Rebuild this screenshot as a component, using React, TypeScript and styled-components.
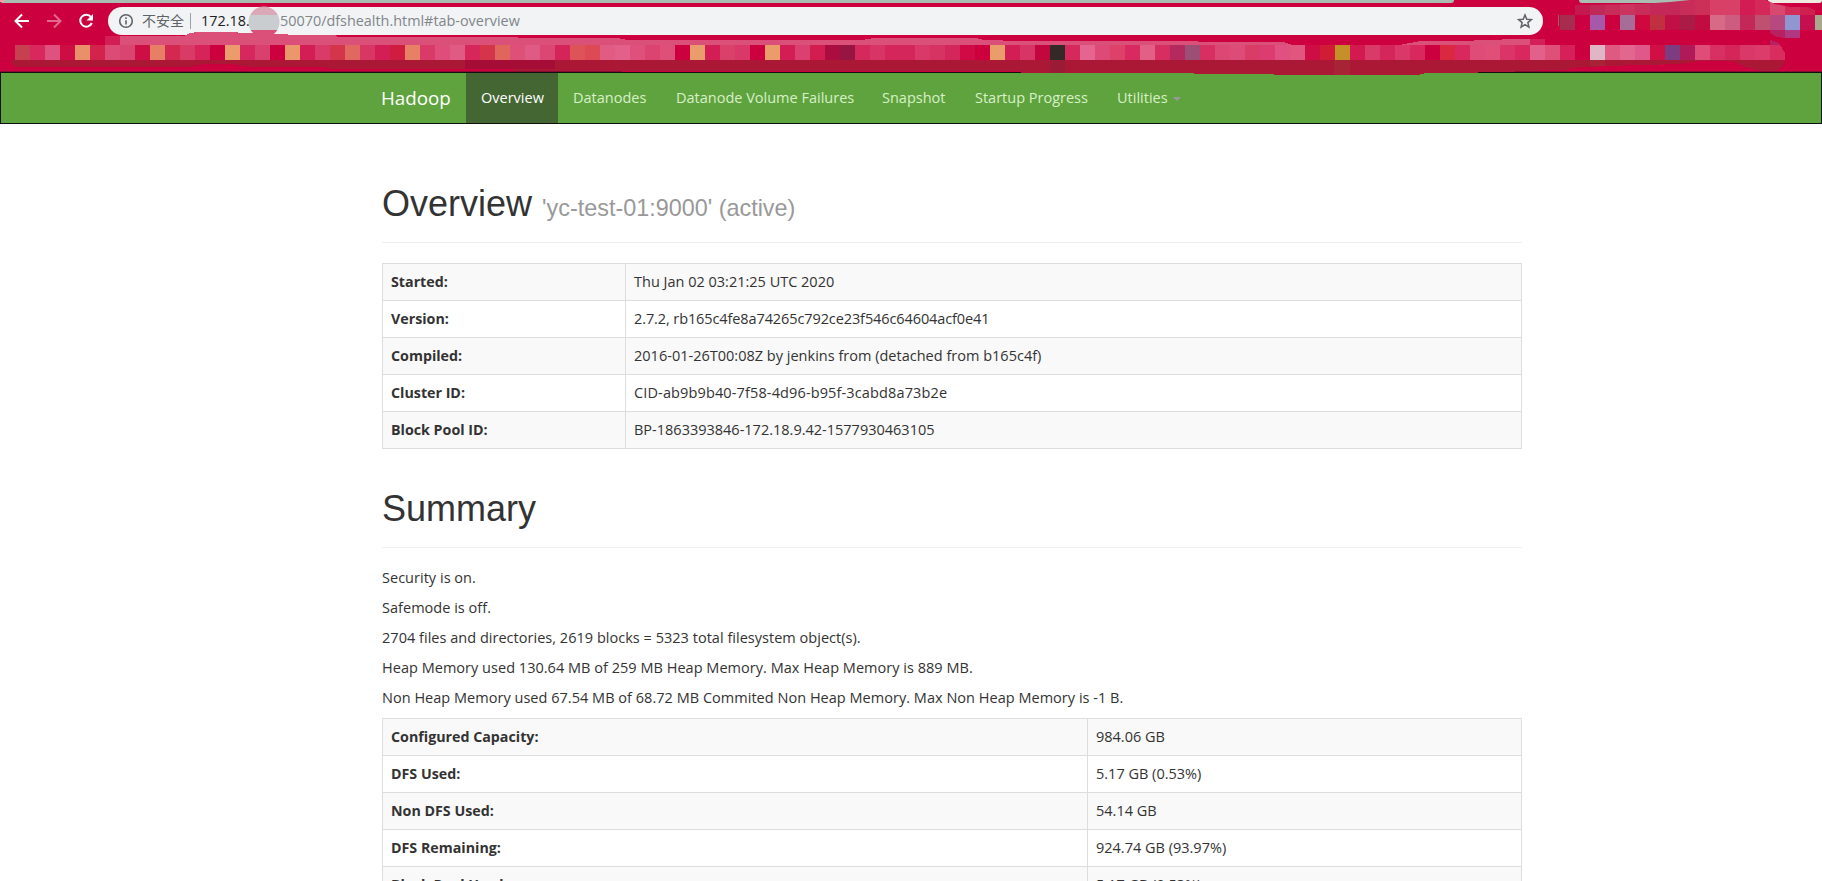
import React from "react";
import styled, { createGlobalStyle } from "styled-components";

const Global = createGlobalStyle`
  * { box-sizing: border-box; }
  html, body { margin: 0; padding: 0; background: #fff; overflow: hidden; }
  body { height: 881px; font: 14.5px/20px "Open Sans", "Noto Sans CJK SC", sans-serif; color: #333; }
`;

const Page = styled.div`
  height: 881px;
  overflow: hidden;
`;

const Browser = styled.header`
  position: relative;
  height: 72px;
  background: #cc003f;
`;

const TabStrip = styled.div`
  display: flex;
  height: 3px;
`;

const Tab = styled.div<{ $w: number; $gap?: number; $c?: string }>`
  width: ${(p) => p.$w}px;
  margin-right: ${(p) => p.$gap ?? 0}px;
  background: ${(p) => p.$c ?? "#a9bdb3"};
  border-radius: 0 0 3px 3px;
`;

const Toolbar = styled.div`
  display: flex;
  align-items: center;
  height: 42px;
  padding: 0 0 6px 14px;
`;

const NavIcon = styled.svg<{ $dim?: boolean }>`
  width: 16px;
  height: 16px;
  margin-right: 16px;
  opacity: ${(p) => (p.$dim ? 0.42 : 1)};
`;

const AddressBar = styled.div`
  display: flex;
  align-items: center;
  width: 1435px;
  height: 28px;
  margin-left: -2px;
  padding: 0 10px;
  border-radius: 14px;
  background: #f1f3f4;
  color: #80868b;
  font-size: 14px;
  white-space: nowrap;
`;

const Warning = styled.span`
  margin-left: 8px;
  padding-right: 6px;
  border-right: 1px solid #9aa0a6;
  line-height: 16px;
  color: #5f6368;
`;

const Url = styled.span`
  flex: 1;
  margin-left: 10px;
  padding-bottom: 1px;
  font-size: 14.4px;
`;

const Host = styled.span`
  display: inline-block;
  width: 79px;
  color: #202124;
`;

const Bookmarks = styled.div`
  display: flex;
  height: 15px;
  padding-left: 15px;
`;

const Block = styled.i<{ $c: string }>`
  width: 15px;
  height: 15px;
  background: ${(p) => p.$c};
`;

const Smears = styled.svg`
  position: absolute;
  top: 0;
  left: 0;
  z-index: 2;
`;

const Navbar = styled.nav`
  display: flex;
  height: 52px;
  padding-left: 365px;
  border: 1px solid #101010;
  background: #5fa33e;
`;

const Brand = styled.a`
  width: 100px;
  padding: 15px 15px;
  font-size: 18.8px;
  color: #fff;
`;

const NavItem = styled.a<{ $w: number; $active?: boolean }>`
  display: flex;
  align-items: center;
  width: ${(p) => p.$w}px;
  padding: 0 15px;
  white-space: nowrap;
  color: ${(p) => (p.$active ? "#fff" : "#d8f0c8")};
  background: ${(p) => (p.$active ? "#446633" : "transparent")};
`;

const Caret = styled.i`
  margin: 2px 0 0 5px;
  border: 4px solid transparent;
  border-top-color: #999;
  border-bottom: 0;
`;

const Container = styled.main`
  width: 1140px;
  margin-left: 382px;
  padding-top: 60px;
`;

const PageHeader = styled.div<{ $top?: number }>`
  height: 59px;
  margin: ${(p) => p.$top ?? 0}px 0 20px;
  border-bottom: 1px solid #eee;
`;

const Title = styled.h1`
  margin: 0;
  font: 500 36px/40px "Liberation Sans", Arial, sans-serif;
  small { font-size: 23.4px; font-weight: 400; color: #999; }
`;

const Table = styled.table`
  width: 1140px;
  border-collapse: collapse;
  table-layout: fixed;
  td, th {
    height: 37px;
    padding: 0 8px 1px;
    border: 1px solid #ddd;
    text-align: left;
    white-space: nowrap;
  }
  tr:nth-child(odd) { background: #f9f9f9; }
`;

const Label = styled.th<{ $w: number }>`
  width: ${(p) => p.$w}px;
  font-size: 14.25px;
`;

const Value = styled.td<{ $s?: number }>`
  letter-spacing: ${(p) => p.$s ?? 0}px;
`;

const Line = styled.p`
  margin: 0 0 10px;
  letter-spacing: 0.025px;
`;

const blocks = (
  "c64150 d8285e df5280 ce0d45 e98f6a d3224b dc4a76 da4470 ce0f45 e77f66 d32950 d93a66 d6245b cc003f ea9c6b d6285f d9406d cc003f eb976c d31d55 " +
  "d93a68 d5354a e06860 d83663 d31d55 d01c41 e78065 da3a68 df4e7a e05a84 d6265a d5354a e0665d df5078 e05a86 db4673 d4245a de5358 dd4a55 " +
  "e15b82 e3608a df507c db4470 df5078 cc003f ea9c6b d31d55 d9406a d93868 cc003f ea9c6b d31d55 dc4070 d31d50 ab0d40 981443 d5285c d83566 d5265c d5265c " +
  "da3868 d63262 d5265c cf0a45 cc003f ea9c6b d31d55 d83566 c2063e 332a28 d5285c e56590 de4a78 dd4068 d82a60 e26085 d82d60 b52a5e 9c4f75 " +
  "d82f62 dc4874 dd4c78 da3c68 dc3c70 e05080 e0567e ce0d45 d01c35 c5902a d31a50 da3a68 d4265a da3868 d8285e cc003f da2840 d8285e df4c78 df4f78 " +
  "da3468 d8285e e2608a df5078 d5205a cc003f e0b5c5 de5a80 e2668e e0588a d01045 7d3c80 b01a58 e04c78 d83062 d5265a da3868 db3c6a d82d5e"
).split(" ");

const extensionBlocks =
  "a82c50 cc0040 a858a8 cc003f a86c98 cf0840 c03040 c01045 a81c45 c00c40 d86a88 cc5c80 c42858 c05070 b84880 9096d0 c41050 a8a890".split(" ");

const extensionTops =
  "c41850 c02858 c82c58 cc3460 c82c58 c42858 c42858 c82c58 cc3058 d84068 d84068 d41c54 d42858 d84870 d42c58 d02050".split(" ");

const info: [string, string, number][] = [
  ["Started:", "Thu Jan 02 03:21:25 UTC 2020", 0],
  ["Version:", "2.7.2, rb165c4fe8a74265c792ce23f546c64604acf0e41", -0.1],
  ["Compiled:", "2016-01-26T00:08Z by jenkins from (detached from b165c4f)", 0.01],
  ["Cluster ID:", "CID-ab9b9b40-7f58-4d96-b95f-3cabd8a73b2e", 0.13],
  ["Block Pool ID:", "BP-1863393846-172.18.9.42-1577930463105", 0],
];

const summary = [
  "Security is on.",
  "Safemode is off.",
  "2704 files and directories, 2619 blocks = 5323 total filesystem object(s).",
  "Heap Memory used 130.64 MB of 259 MB Heap Memory. Max Heap Memory is 889 MB.",
  "Non Heap Memory used 67.54 MB of 68.72 MB Commited Non Heap Memory. Max Non Heap Memory is -1 B.",
];

const capacity: [string, string, number][] = [
  ["Configured Capacity:", "984.06 GB", 0],
  ["DFS Used:", "5.17 GB (0.53%)", 0],
  ["Non DFS Used:", "54.14 GB", 0],
  ["DFS Remaining:", "924.74 GB (93.97%)", 0],
  ["Block Pool Used:", "5.17 GB (0.53%)", 0],
];

function Rows({ rows, w }: { rows: [string, string, number][]; w: number }) {
  return (
    <Table>
      <tbody>
        {rows.map(([k, v, s]) => (
          <tr key={k}>
            <Label $w={w}>{k}</Label>
            <Value $s={s}>{v}</Value>
          </tr>
        ))}
      </tbody>
    </Table>
  );
}

function SmearLayer() {
  return (
    <Smears width="1822" height="80" viewBox="0 0 1822 80" shapeRendering="crispEdges">
      <defs>
        <clipPath id="ext"><path d="M1575 5L1640 4L1670 2L1690 0H1766L1775 4L1790 7H1808L1819 12L1821 15H1575Z" /></clipPath>
        <clipPath id="blob"><circle cx="264" cy="22" r="15.500" /></clipPath>
      </defs>
      {/* Redaction strokes above and below the bookmarks */}
      <path fill="#d31d55" d="M105 36H120V45H105z" />
      <path fill="#db5078" d="M120 36H184L190 33L198 32H238V33H248L288 34V35H335L338 37H518V38H618L627 40H865V39L876 38H973L982 39V40L1024 41H1196L1200 42H1283L1292 45H120z" />
      <path fill="#db5078" d="M1399 45L1421 41H1474V40L1530 39V45z" />
      <path fill="#d42058" d="M1530 39H1545V45H1530z" />
      <path fill="#880c30" d="M0 71H622V72H0zM1515 71H1822V72H1515z" />
      <path fill="#aa1836" d="M10 60H1785L1783 66L1776 71H1764L1748 68L1735 62L1730 61H1700L1680 64L1605 66L1573 68L1565 70L1515 71V72H1478V73H1424V74H1420V75H1274V74H1194V73H1021V71H865V71H515L512 69H335L320 67H250L232 64H205L188 67H15z" />
      <path fill="#a50d36" d="M465 60H555V69H465z" />
      <path fill="#a62436" d="M1334 60H1350V75H1334zM1590 60H1605V66H1590z" />
      <path fill="#9b1a36" d="M1050 60H1065V73H1050z" />
      {/* Redacted part of the address */}
      <g clipPath="url(#blob)">
        <path fill="#dba8b8" d="M248 6H280V15H248z" />
        <path fill="#c9cdd0" d="M248 15H280V30H248z" />
        <path fill="#db5078" d="M248 30H280V38H248z" />
      </g>
      {/* Redacted extension icons */}
      <g clipPath="url(#ext)">
        {extensionTops.map((c, i) => <rect key={i} x={1575 + i * 15} y="0" width="15" height="15" fill={"#" + c} />)}
      </g>
      {extensionBlocks.map((c, i) => <rect key={i} x={1560 + i * 15} y="15" width="15" height="15" fill={"#" + c} />)}
      <path fill="#8d6a62" d="M1558 15H1559V26H1558z" />
      <path fill="#b82060" d="M1770 30H1785V38L1777 37L1770 33zM1770 40L1777 42L1780 45H1770z" />
      <path fill="#b03880" d="M1785 30H1800V38H1785z" />
      <path fill="#cc003f" d="M1780 45H1786V60H1785V53z" />
      <path fill="#f6a0a8" d="M0 0H5L3 2H0z" />
    </Smears>
  );
}

export default function App() {
  return (
    <Page>
      <Global />
      <Browser>
        <TabStrip>
          <Tab $w={1454} $gap={125} />
          <Tab $w={111} $gap={78} />
          <Tab $w={54} $c="#f0ebe0" />
        </TabStrip>
        <Toolbar>
          <NavIcon viewBox="0 0 16 16" fill="none" stroke="#fff" strokeWidth="2"><path d="M15 8H2M8 1.5L1.5 8L8 14.5" /></NavIcon>
          <NavIcon $dim viewBox="0 0 16 16" fill="none" stroke="#fff" strokeWidth="2"><path d="M1 8h13M8 1.5L14.500 8L8 14.500" /></NavIcon>
          <NavIcon viewBox="0 0 16 16" fill="none" stroke="#fff" strokeWidth="2"><path d="M13 4A6 6 0 1 0 13.800 10" /><path d="M15 1v6.500H8.500z" fill="#fff" stroke="none" /></NavIcon>
          <AddressBar>
            <svg width="16" height="16" viewBox="0 0 16 16" fill="none" stroke="#5f6368" strokeWidth="1.600"><circle cx="8" cy="8" r="6.300" /><path d="M8 7.200v4.300M8 4.300v1.700" /></svg>
            <Warning>不安全</Warning>
            <Url><Host>172.18.</Host>50070/dfshealth.html#tab-overview</Url>
            <svg width="16" height="16" viewBox="0 0 24 24" fill="none" stroke="#5f6368" strokeWidth="2.300"><path d="M12 3l2.700 6.300 6.800.6-5.200 4.500 1.600 6.700L12 17.500l-5.900 3.600 1.600-6.700L2.500 9.900l6.800-.6z" /></svg>
          </AddressBar>
        </Toolbar>
        <Bookmarks>{blocks.map((c, i) => <Block key={i} $c={"#" + c} />)}</Bookmarks>
        <SmearLayer />
      </Browser>
      <Navbar>
        <Brand>Hadoop</Brand>
        <NavItem $w={92} $active>Overview</NavItem>
        <NavItem $w={103}>Datanodes</NavItem>
        <NavItem $w={206}>Datanode Volume Failures</NavItem>
        <NavItem $w={93}>Snapshot</NavItem>
        <NavItem $w={142}>Startup Progress</NavItem>
        <NavItem $w={95}>Utilities<Caret /></NavItem>
      </Navbar>
      <Container>
        <PageHeader><Title>Overview <small>'yc-test-01:9000' (active)</small></Title></PageHeader>
        <Rows rows={info} w={243} />
        <PageHeader $top={40}><Title>Summary</Title></PageHeader>
        {summary.map((s) => <Line key={s}>{s}</Line>)}
        <Rows rows={capacity} w={705} />
      </Container>
    </Page>
  );
}
